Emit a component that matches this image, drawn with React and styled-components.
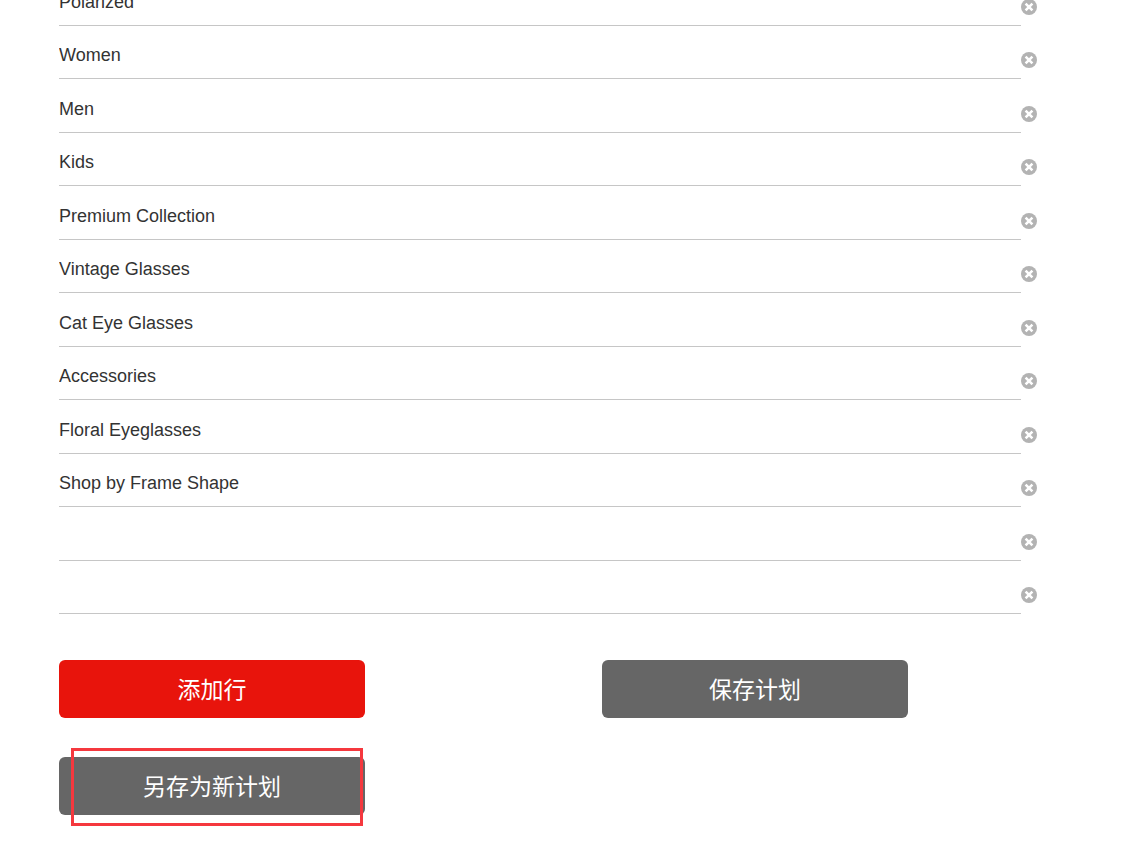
import React, { useState } from "react";
import styled, { createGlobalStyle } from "styled-components";

const GlobalStyle = createGlobalStyle`
  * { box-sizing: border-box; }
  body {
    margin: 0;
    background: #fff;
    color: #333;
    font-family: "Liberation Sans", Arial, "Noto Sans CJK SC", sans-serif;
  }
`;

const Page = styled.main`
  overflow: hidden;
  padding: 0 1px 28px 59px;
`;

const KeywordList = styled.ul`
  list-style: none;
  margin: -28px 108px 46px 0;
  padding: 0;
`;

const KeywordRow = styled.li`
  display: flex;
  align-items: flex-end;
  height: 53px;

  &:nth-child(odd) {
    height: 54px;
  }
`;

const KeywordInput = styled.input`
  flex: 1;
  min-width: 0;
  height: 44px;
  padding: 0 0 2px;
  border: 0;
  border-bottom: 1px solid #c6c6c6;
  outline: 0;
  background: transparent;
  color: #333;
  font-family: inherit;
  font-size: 18px;
`;

const RemoveButton = styled.button`
  display: flex;
  width: 16px;
  height: 16px;
  margin-bottom: 11px;
  padding: 0;
  border: 0;
  background: none;
  cursor: pointer;
`;

const Actions = styled.div`
  display: grid;
  grid-template-columns: 1fr 1fr;
  row-gap: 39px;
`;

const ActionSlot = styled.div`
  position: relative;
  width: 100%;
  max-width: 306px;
`;

const ActionButton = styled.button`
  display: block;
  width: 100%;
  height: 58px;
  padding: 0 0 2px;
  border: 0;
  border-radius: 6px;
  background: ${({ $primary }) => ($primary ? "#e8140c" : "#666")};
  color: #fff;
  font-family: "Noto Sans CJK SC", sans-serif;
  font-size: 23px;
  line-height: 56px;
  cursor: pointer;
`;

const Highlight = styled.span`
  position: absolute;
  inset: -9px 2px -11px 12px;
  border: 3px solid #f5383e;
  pointer-events: none;
`;

const initialKeywords = [
  "Polarized",
  "Women",
  "Men",
  "Kids",
  "Premium Collection",
  "Vintage Glasses",
  "Cat Eye Glasses",
  "Accessories",
  "Floral Eyeglasses",
  "Shop by Frame Shape",
  "",
  "",
];

function RemoveIcon() {
  return (
    <svg width="16" height="16" viewBox="0 0 16 16" aria-hidden="true">
      <circle cx="8" cy="8" r="8" fill="#b3b3b3" />
      <path d="M4.6 4.6 11.4 11.4M11.4 4.6 4.6 11.4" stroke="#fff" strokeWidth="2.6" />
    </svg>
  );
}

export default function App() {
  const [keywords, setKeywords] = useState(initialKeywords);

  const update = (index, value) =>
    setKeywords(keywords.map((word, i) => (i === index ? value : word)));
  const remove = (index) => setKeywords(keywords.filter((_, i) => i !== index));

  return (
    <Page>
      <GlobalStyle />
      <KeywordList>
        {keywords.map((word, index) => (
          <KeywordRow key={index}>
            <KeywordInput
              type="text"
              aria-label={`关键词 ${index + 1}`}
              value={word}
              onChange={(event) => update(index, event.target.value)}
            />
            <RemoveButton type="button" aria-label="删除" onClick={() => remove(index)}>
              <RemoveIcon />
            </RemoveButton>
          </KeywordRow>
        ))}
      </KeywordList>
      <Actions>
        <ActionSlot>
          <ActionButton type="button" $primary onClick={() => setKeywords([...keywords, ""])}>
            添加行
          </ActionButton>
        </ActionSlot>
        <ActionSlot>
          <ActionButton type="button">保存计划</ActionButton>
        </ActionSlot>
        <ActionSlot>
          <ActionButton type="button">另存为新计划</ActionButton>
          <Highlight />
        </ActionSlot>
      </Actions>
    </Page>
  );
}
